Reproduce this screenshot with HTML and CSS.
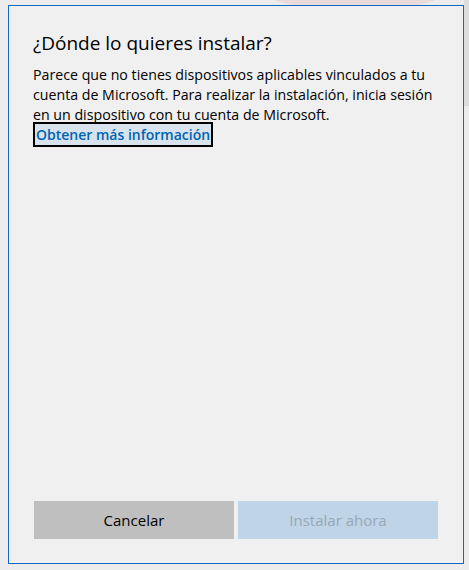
FILE: index.html
```html
<!DOCTYPE html>
<html lang="es">
<head>
  <meta charset="UTF-8" />
  <title>¿Dónde lo quieres instalar?</title>
  <link rel="stylesheet" href="styles.css">
</head>
<body>
  <div class="backdrop">
    <div class="blob"></div>
    <div class="side-block"></div>
  </div>

  <div class="dialog">
    <h1 class="title">¿Dónde lo quieres instalar?</h1>
    <p class="message">
      Parece que no tienes dispositivos aplicables vinculados a tu
      cuenta de Microsoft. Para realizar la instalación, inicia sesión
      en un dispositivo con tu cuenta de Microsoft.
    </p>
    <div class="link-row">
      <a href="#" class="more-link">Obtener más información</a>
    </div>

    <div class="actions">
      <button class="btn btn-cancel">Cancelar</button>
      <button class="btn btn-install" disabled>Instalar ahora</button>
    </div>
  </div>
</body>
</html>
```

FILE: styles.css
```css
body {
  margin: 0;
  width: 469px;
  height: 570px;
  background: #ececec;
  font-family: 'Open Sans', 'Noto Sans', sans-serif;
  position: relative;
  overflow: hidden;
}

/* faint app content behind the dialog */
.backdrop .blob {
  position: absolute;
  top: -20px;
  left: 270px;
  width: 170px;
  height: 30px;
  border-radius: 50%;
  background: rgba(230, 190, 190, 0.35);
}

.backdrop .side-block {
  position: absolute;
  top: 0;
  right: 0;
  width: 5px;
  height: 106px;
  background: #dddddd;
}

.dialog {
  position: relative;
  margin: 5px 0 0 8px;
  width: 456px;
  height: 559px;
  box-sizing: border-box;
  border: 1px solid #1269c4;
  background: #f0f0f0;
  display: flex;
  flex-direction: column;
  padding: 0 23px 24px 24px;
}

.title {
  margin: 24px 0 0 0;
  font-size: 19px;
  font-weight: 400;
  color: #000;
  line-height: 26px;
}

.message {
  margin: 9px 0 0 0;
  font-size: 14.2px;
  line-height: 20px;
  color: #000;
}

.link-row {
  display: flex;
  margin-top: -3px;
}

.more-link {
  display: block;
  border: 2px solid #000;
  background: #d8e3ee;
  color: #0063b1;
  font-weight: 600;
  font-size: 14px;
  line-height: 21px;
  padding: 0 1px;
  text-decoration: none;
}

.actions {
  margin-top: auto;
  display: flex;
  gap: 4px;
  padding-left: 1px;
}

.btn {
  width: 200px;
  height: 38px;
  border: none;
  font-family: inherit;
  font-size: 15px;
}

.btn-cancel {
  background: #bfbfbf;
  color: #000;
}

.btn-install {
  background: #bfd4e6;
  color: #97a8b8;
}
```
